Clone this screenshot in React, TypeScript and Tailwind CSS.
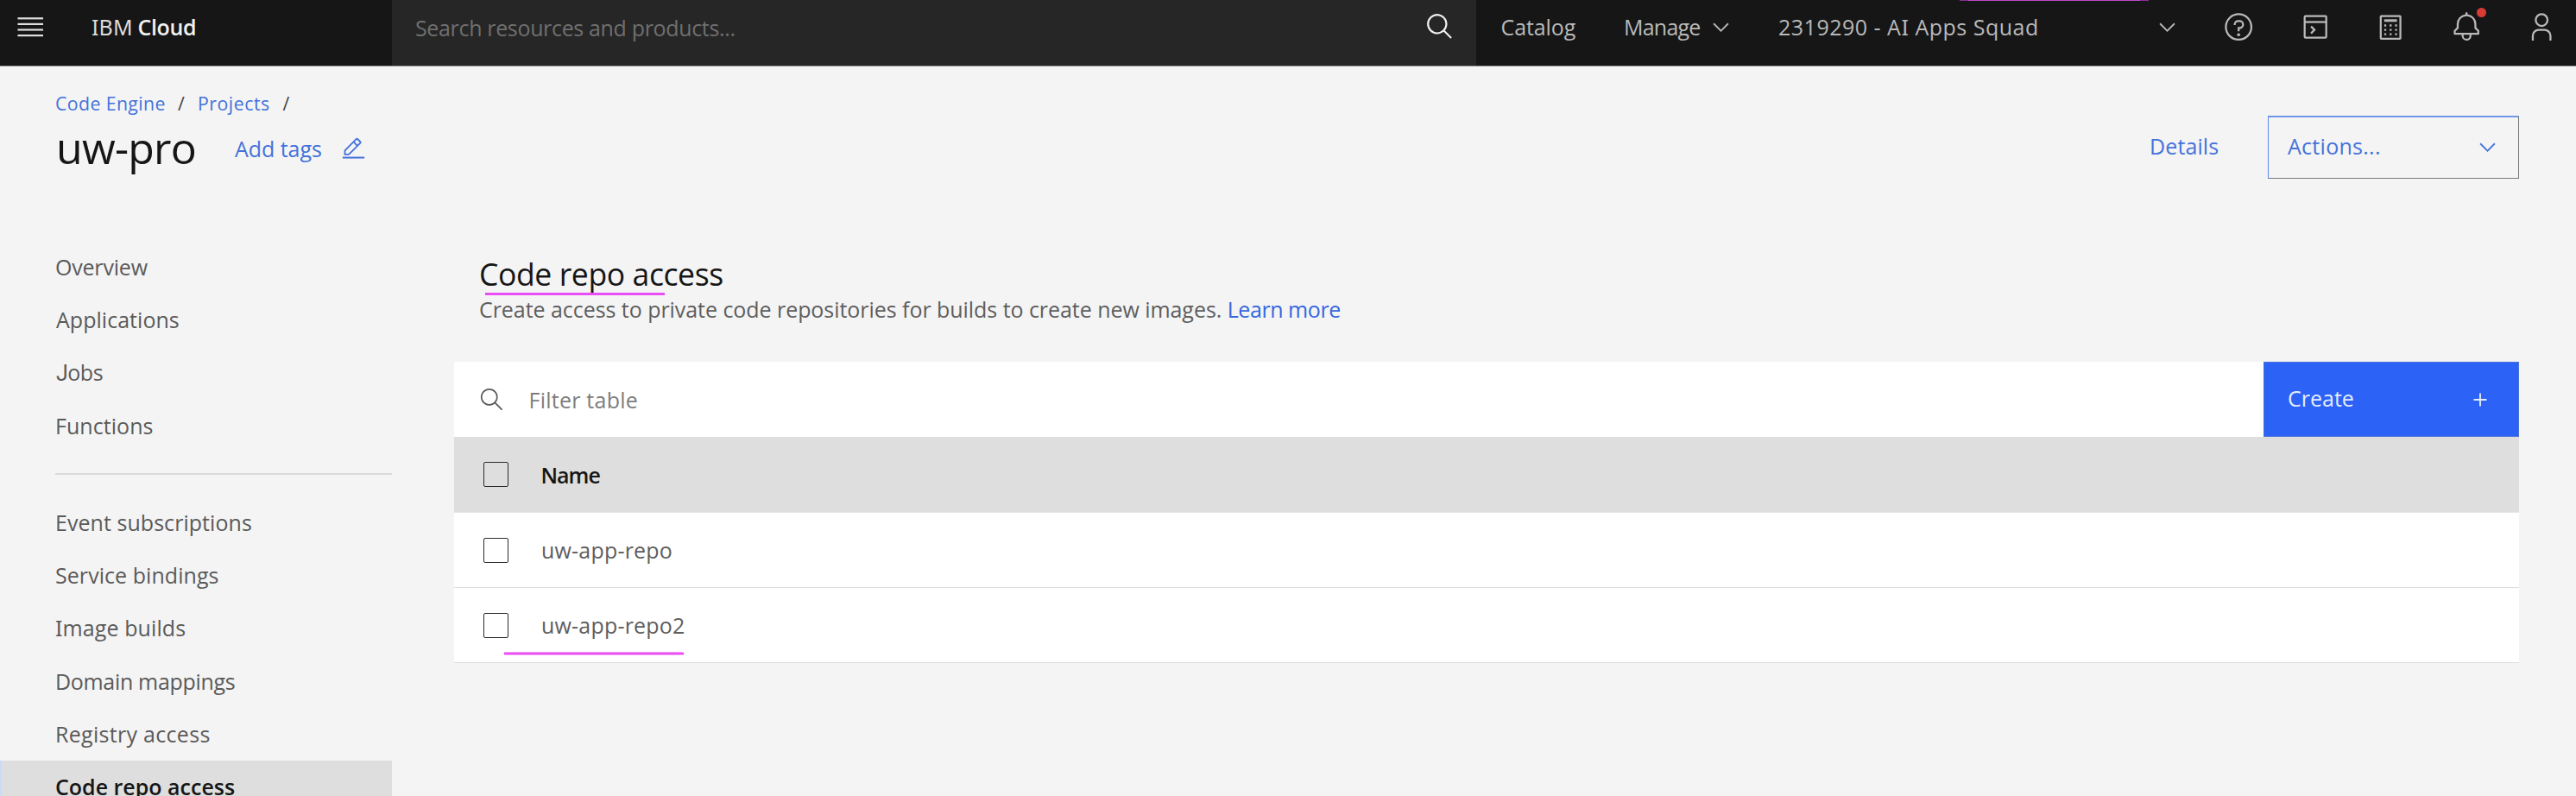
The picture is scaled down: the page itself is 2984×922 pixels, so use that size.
import type { ReactNode } from "react";

/** Capital I with serifs. */
function SerifI() {
  return <span className="font-['Noto_Sans',sans-serif] leading-none">I</span>;
}

function ChevronDown({ className = "" }: { className?: string }) {
  return (
    <svg viewBox="0 0 16 16" className={`h-[29px] w-[29px] shrink-0 ${className}`} fill="currentColor">
      <path d="M8 11 3 6 3.7 5.3 8 9.6 12.3 5.3 13 6z" />
    </svg>
  );
}

function HeaderIcon({ children, className = "" }: { children: ReactNode; className?: string }) {
  return (
    <svg
      viewBox="0 0 32 32"
      className={`h-[36.4px] w-[36.4px] shrink-0 ${className}`}
      fill="none"
      stroke="currentColor"
      strokeWidth="2"
    >
      {children}
    </svg>
  );
}

function Checkbox() {
  return <span className="ml-[34px] h-[29px] w-[29px] shrink-0 rounded-[2px] border border-[#2b2b2b]" />;
}

function TopBar() {
  return (
    <header className="flex h-[77px] shrink-0 border-b border-[#909090] bg-[#161616] text-[#b9b9b9]">
      <div className="flex w-[454px] shrink-0 items-center pb-[14px] pl-5 text-[#f0f0f0]">
        <svg viewBox="0 0 30 24" className="h-6 w-[30px]" fill="#dedede">
          <rect x="0.5" y="1.2" width="29.5" height="2.2" />
          <rect x="0.5" y="7.8" width="29.5" height="2.2" />
          <rect x="0.5" y="14.4" width="29.5" height="2.2" />
          <rect x="0.5" y="21" width="29.5" height="2.2" />
        </svg>
        <span className="ml-14 w-[53.500px] font-['Noto_Sans',sans-serif] tracking-[0.14px] text-[#dcdcdc]">IBM</span>
        <span className="font-semibold tracking-[-0.35px]">Cloud</span>
      </div>
      <div className="flex w-[1256px] shrink-0 items-center justify-between bg-[#262626] pr-[25.500px] pb-[14px] pl-[27px]">
        <span className="pt-[2px] tracking-[-0.34px] text-[#6f6f6f]">Search resources and products...</span>
        <svg viewBox="0 0 32 32" className="h-[34px] w-[34px] text-[#f0f0f0]" fill="currentColor">
          <path d="M29,27.586l-7.552-7.552a11.018,11.018,0,1,0-1.414,1.414L27.586,29ZM4,13a9,9,0,1,1,9,9A9.01,9.01,0,0,1,4,13Z" />
        </svg>
      </div>
      <nav className="flex items-center pb-[14px] pl-[28.5px]">
        <span className="w-[142.5px] tracking-[-0.1px]">Catalog</span>
        <span className="w-[97.5px] tracking-[-0.77px]">Manage</span>
        <ChevronDown />
        <span className="ml-[52.5px] w-[436px] tracking-[0.5px]">
          2319290 - A<SerifI /> Apps Squad
        </span>
        <ChevronDown />
      </nav>
      <div className="flex items-center gap-[51.2px] pb-[14px] pl-[49.5px]">
        <HeaderIcon>
          <circle cx="16" cy="16" r="13" />
          <path
            fill="currentColor"
            stroke="none"
            d="M17,9H15.5A4.49,4.49,0,0,0,11,13.5V14h2v-.5A2.5,2.5,0,0,1,15.5,11H17a2.5,2.5,0,0,1,0,5H15v4.5h2V18a4.5,4.5,0,0,0,0-9Z"
          />
          <circle cx="16" cy="24" r="1.6" fill="currentColor" stroke="none" />
        </HeaderIcon>
        <HeaderIcon className="ml-[1.500px]">
          <rect x="5" y="5" width="22" height="22" rx="1" />
          <path d="M5 11h22" />
          <path d="M11.5 15.5 15 19l-3.500 3.500" />
        </HeaderIcon>
        <HeaderIcon>
          <rect x="6" y="5" width="20" height="23" rx="0.6" />
          <path d="M9.500 9.500h13" strokeWidth="2.600" />
          <path d="M9.600 14.500h13M9.600 19h13M9.600 23.500h13" strokeDasharray="2 3.5" />
        </HeaderIcon>
        <div className="relative flex">
          <HeaderIcon>
            <path
              fill="currentColor"
              stroke="none"
              d="M28.707,19.293,26,16.586V13a10.014,10.014,0,0,0-9-9.949V1H15V3.051A10.014,10.014,0,0,0,6,13v3.586L3.293,19.293A1,1,0,0,0,3,20v3a1,1,0,0,0,1,1h7v.777a5.152,5.152,0,0,0,4.500,5.199A5.006,5.006,0,0,0,21,25V24h7a1,1,0,0,0,1-1V20A1,1,0,0,0,28.707,19.293ZM19,25a3,3,0,0,1-6,0V24h6Zm8-3H5V20.414L7.707,17.707A1,1,0,0,0,8,17V13a8,8,0,0,1,16,0v4a1,1,0,0,0,.293.707L27,20.414Z"
            />
          </HeaderIcon>
          <span className="absolute -top-[4px] left-[30px] h-[11px] w-[11px] rounded-full bg-[#da3b34]" />
        </div>
        <HeaderIcon>
          <circle cx="16" cy="9" r="6" />
          <path d="M7 30v-5a6 6 0 0 1 6-6h6a6 6 0 0 1 6 6v5" />
        </HeaderIcon>
      </div>
    </header>
  );
}

function PageHeader() {
  return (
    <section className="flex h-[200px] shrink-0 justify-between pr-[66px] pl-16 text-[#4472db]">
      <div className="pt-[27px]">
        <div className="flex h-8 items-center text-[21.3px]">
          <span className="w-[142px] tracking-[0.39px]">Code Engine</span>
          <span className="w-[23px] text-[#444444]">/</span>
          <span className="w-[98.500px] tracking-[0.51px]">Projects</span>
          <span className="text-[#444444]">/</span>
        </div>
        <div className="-mt-px flex h-[72px] items-center">
          <h1 className="w-[208px] pl-px text-[50px] leading-[72px] tracking-[-0.76px] text-[#161616]">uw-pro</h1>
          <span className="w-[123px] pt-[2px] tracking-[-0.05px]">Add tags</span>
          <svg viewBox="0 0 16 16" className="mt-[3px] h-[29px] w-[29px]" fill="currentColor">
            <path d="M1 13H15V14.100H1z" />
            <path d="M12.700 4.500c.4-.4.4-1 0-1.400l-1.800-1.800c-.4-.4-1-.4-1.400 0L2 8.800V12h3.200L12.700 4.500zM10.200 2 12 3.800l-1.500 1.500L8.700 3.500 10.200 2zM3 11V9.200l5-5L9.800 6l-5 5H3z" />
          </svg>
        </div>
      </div>
      <div className="flex items-start pt-[57px]">
        <span className="w-[137px] pt-[17px] tracking-[0.1px]">Details</span>
        <button className="flex h-[73px] w-[291px] items-start justify-between border border-t-2 border-t-[#6f97e3] border-r-[#777777] border-b-[#777777] border-l-[#5b8bea] pr-[21.500px] pl-[22px]">
          <span className="pt-[15px] tracking-[0.28px]">Actions...</span>
          <ChevronDown className="mt-[20px]" />
        </button>
      </div>
    </section>
  );
}

function SideItem({ children, active = false }: { children: ReactNode; active?: boolean }) {
  return (
    <div
      className={
        active
          ? "flex h-[61.300px] shrink-0 items-center border-l-2 border-[#c9dafb] bg-[#dedede] pl-[62px] font-semibold text-[#161616]"
          : "flex h-[61.300px] shrink-0 items-center pl-16"
      }
    >
      {children}
    </div>
  );
}

function Sidebar() {
  return (
    <aside className="flex w-[454px] shrink-0 flex-col pt-px text-[#5a5a5a]">
      <SideItem>
        <span className="tracking-[-0.2px]">Overview</span>
      </SideItem>
      <SideItem>
        <span className="pl-px tracking-[0.03px]">Applications</span>
      </SideItem>
      <SideItem>
        <span className="pl-px tracking-[-0.5px]">
          <span className="font-[Roboto,sans-serif] leading-none">J</span>obs
        </span>
      </SideItem>
      <SideItem>
        <span className="tracking-[0.05px]">Functions</span>
      </SideItem>
      <div className="mt-[25px] mb-[24px] ml-16 h-[2px] shrink-0 bg-[#dadada]" />
      <SideItem>
        <span className="tracking-[0.05px]">Event subscriptions</span>
      </SideItem>
      <SideItem>
        <span className="tracking-[0.06px]">Service bindings</span>
      </SideItem>
      <SideItem>
        <span className="tracking-[0.1px]">
          <SerifI />
          mage builds
        </span>
      </SideItem>
      <SideItem>
        <span className="tracking-[-0.32px]">Domain mappings</span>
      </SideItem>
      <SideItem>
        <span className="tracking-[0.3px]">Registry access</span>
      </SideItem>
      <SideItem active>
        <span className="-mt-px">Code repo access</span>
      </SideItem>
    </aside>
  );
}

function RepoTable() {
  return (
    <div className="mt-[41px]">
      <div className="flex h-[87px] bg-white">
        <div className="flex flex-1 items-center pl-[28.500px]">
          <svg viewBox="0 0 16 16" className="h-[29px] w-[29px] text-[#5a5a5a]" fill="currentColor">
            <path d="M15 14.300L10.700 10c1.900-2.300 1.600-5.800-.7-7.700S4.200.7 2.300 3 .7 8.800 3 10.700c2 1.700 5 1.700 7 0l4.300 4.300.7-.7zM2 6.500C2 4 4 2 6.500 2S11 4 11 6.500 9 11 6.500 11 2 9 2 6.500z" />
          </svg>
          <span className="ml-[29px] tracking-[0.24px] text-[#7d7d7d]">Filter table</span>
        </div>
        <button className="flex w-[296px] items-center justify-between border border-[#4a72d8] bg-[#2c62f5] pr-[29px] pb-[3px] pl-[27px] text-[#e4ecff]">
          <span>Create</span>
          <svg viewBox="0 0 32 32" className="mt-[3px] h-[30px] w-[30px]" fill="currentColor">
            <path d="M17 15V8h-2v7H8v2h7v7h2v-7h7v-2z" />
          </svg>
        </button>
      </div>
      <div className="flex h-[88px] items-center border-b border-[#e6e6e6] bg-[#dedede] font-semibold text-[#161616]">
        <Checkbox />
        <span className="ml-[37.500px] tracking-[-1px]">Name</span>
      </div>
      <div className="flex h-[87px] items-center border-b border-[#dedede] bg-white">
        <Checkbox />
        <span className="ml-[38px] tracking-[0.2px]">uw-app-repo</span>
      </div>
      <div className="relative flex h-[87px] items-center border-b border-[#dedede] bg-white">
        <Checkbox />
        <span className="ml-[38px] tracking-[0.2px]">uw-app-repo2</span>
        <span className="absolute top-[74px] left-[58px] h-[4px] w-[208px] border-y border-[#f4a3f8] bg-[#ea4df5]" />
      </div>
    </div>
  );
}

export default function App() {
  return (
    <div className="relative flex h-[922px] w-[2984px] flex-col overflow-hidden bg-[#f4f4f4] font-['Open_Sans',sans-serif] text-[25px] leading-[36px] whitespace-nowrap">
      <TopBar />
      <PageHeader />
      <div className="flex min-h-0 flex-1">
        <Sidebar />
        <main className="ml-[72px] w-[2392px] pt-[18px] text-[#5e5e5e]">
          <div className="relative flex pl-[29px]">
            <h2 className="text-[35.600px] leading-[45px] tracking-[-0.42px] text-[#161616]">Code repo access</h2>
            <span className="absolute top-[44px] left-[36px] h-[3px] w-[208px] bg-[#ea4df5]" />
          </div>
          <p className="-mt-px pl-[29px] leading-[39px] tracking-[-0.05px]">
            Create access to private code repositories for builds to create new images.{" "}
            <span className="tracking-[-0.44px] text-[#3567de]">Learn more</span>
          </p>
          <RepoTable />
        </main>
      </div>
      <div className="absolute top-0 left-[2270px] h-px w-[219px] border-x-[10px] border-[#8a2f94] bg-[#c14acb]" />
    </div>
  );
}
